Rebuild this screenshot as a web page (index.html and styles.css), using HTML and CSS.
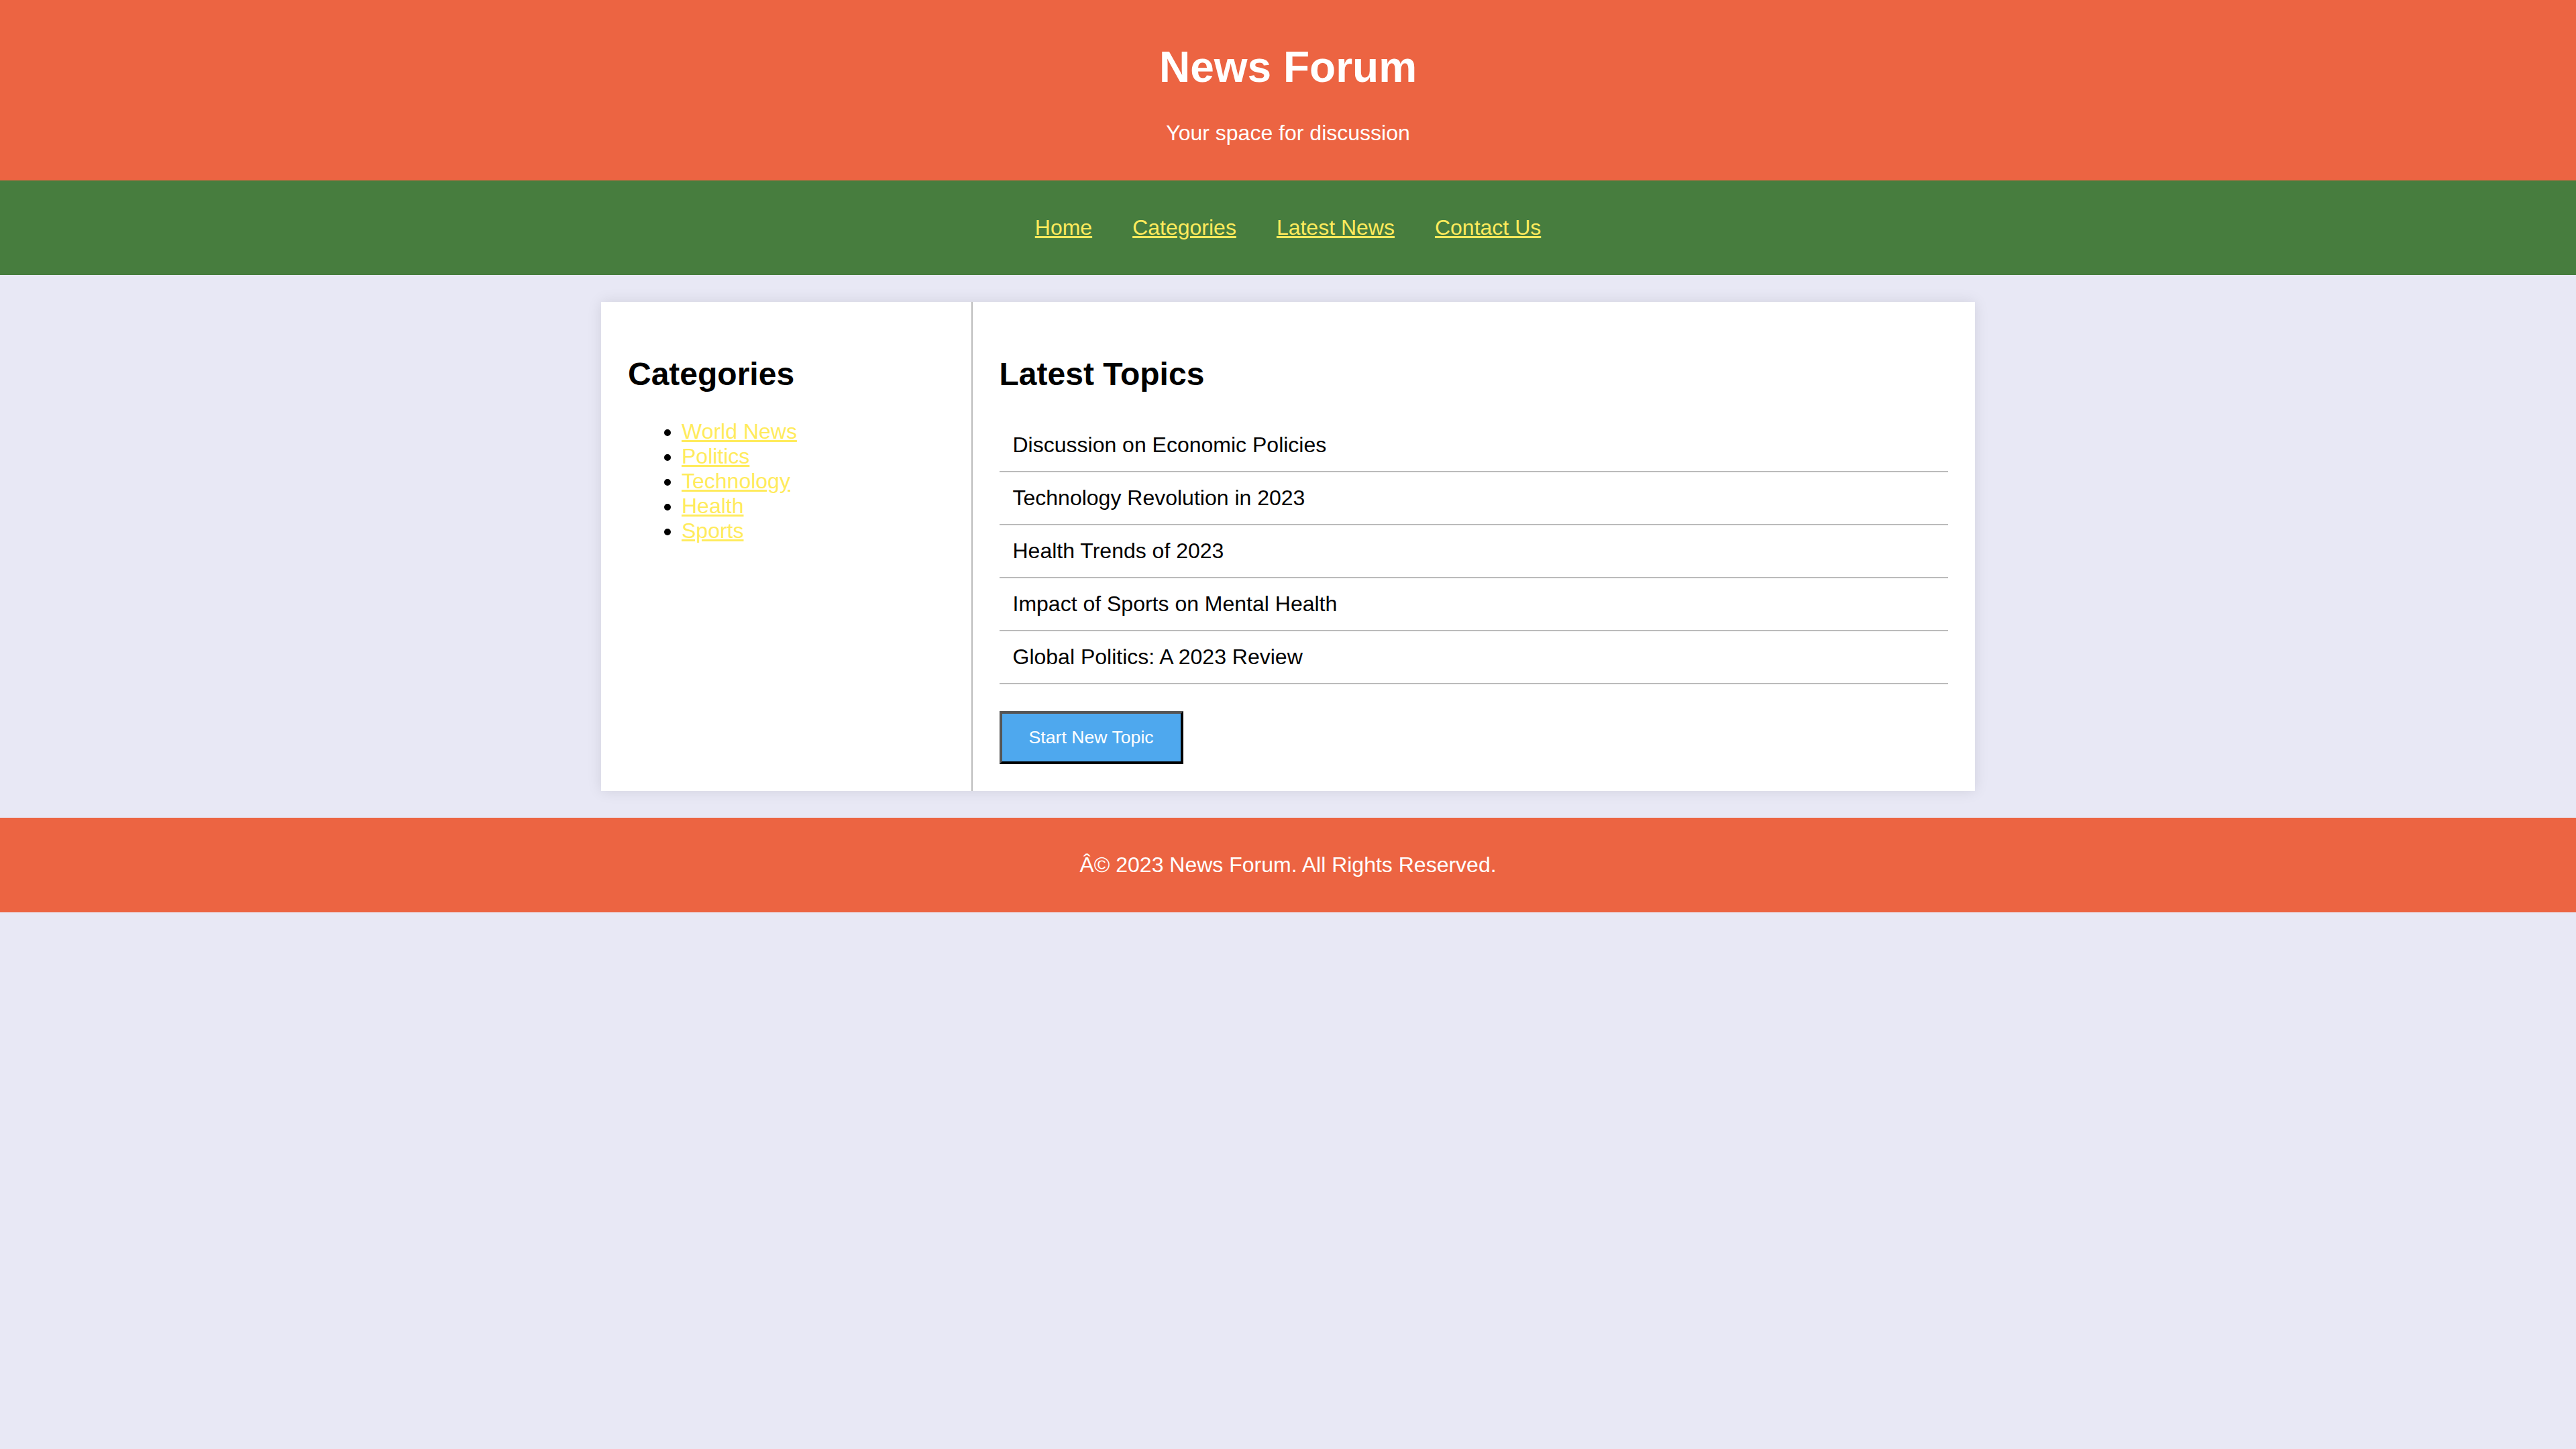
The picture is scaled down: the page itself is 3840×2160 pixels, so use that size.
FILE: index.html
```html
<!DOCTYPE html>
<html lang="en">
<head>
<meta charset="utf-8">
<title>News Forum</title>
<link rel="stylesheet" href="styles.css">
</head>
<body>
<header class="site-header">
  <h1 class="site-title">News Forum</h1>
  <p class="site-tagline">Your space for discussion</p>
</header>
<nav class="site-nav">
  <ul class="nav-list">
    <li><a href="#">Home</a></li>
    <li><a href="#">Categories</a></li>
    <li><a href="#">Latest News</a></li>
    <li><a href="#">Contact Us</a></li>
  </ul>
</nav>
<main class="container">
  <aside class="sidebar">
    <h2 class="section-title">Categories</h2>
    <ul class="category-list">
      <li><a href="#">World News</a></li>
      <li><a href="#">Politics</a></li>
      <li><a href="#">Technology</a></li>
      <li><a href="#">Health</a></li>
      <li><a href="#">Sports</a></li>
    </ul>
  </aside>
  <section class="content">
    <h2 class="section-title">Latest Topics</h2>
    <ul class="topic-list">
      <li>Discussion on Economic Policies</li>
      <li>Technology Revolution in 2023</li>
      <li>Health Trends of 2023</li>
      <li>Impact of Sports on Mental Health</li>
      <li>Global Politics: A 2023 Review</li>
    </ul>
    <button class="new-topic" type="button">Start New Topic</button>
  </section>
</main>
<footer class="site-footer">
  <p class="copyright">Â© 2023 News Forum. All Rights Reserved.</p>
</footer>
</body>
</html>
```

FILE: styles.css
```css
html, body {
  margin: 0;
  padding: 0;
}

body {
  background: #e8e8f5;
  font-family: "Liberation Sans", Arial, Helvetica, sans-serif;
  font-size: 32px;
  color: #000;
}

.site-header {
  background: #ec6442;
  color: #fff;
  text-align: center;
  padding: 20px;
}

.site-title {
  font-size: 64px;
  margin: 43px 0;
}

.site-tagline {
  margin: 32px 0;
}

.site-nav {
  background: #477d3e;
  padding: 20px;
}

.nav-list {
  list-style: none;
  margin: 32px 0;
  padding: 0;
  display: flex;
  justify-content: center;
  gap: 60px;
}

.nav-list a {
  color: #ffeb5c;
}

.container {
  display: flex;
  width: 2048px;
  margin: 40px auto;
  background: #fff;
  box-shadow: 0 0 20px rgba(0, 0, 0, 0.1);
}

.sidebar {
  flex: 1;
  padding: 40px;
  border-right: 2px solid #bbb;
}

.content {
  flex: 3;
  padding: 40px;
}

.section-title {
  font-size: 48px;
  margin: 39.84px 0;
}

.category-list {
  margin: 32px 0;
  padding-left: 80px;
}

.category-list a {
  color: #ffeb5c;
}

.topic-list {
  list-style: none;
  margin: 0;
  padding: 0;
}

.topic-list li {
  padding: 20px;
  border-bottom: 2px solid #bbb;
}

.new-topic {
  display: block;
  margin-top: 40px;
  padding: 20px 40px;
  background: #4ea8ee;
  color: #fff;
  font-family: "Liberation Sans", Arial, Helvetica, sans-serif;
  font-size: 26.67px;
  border-style: solid;
  border-width: 4px;
  border-color: #555 #000 #000 #555;
}

.site-footer {
  background: #ec6442;
  color: #fff;
  text-align: center;
  padding: 20px;
}

.copyright {
  margin: 32px 0;
}
```
